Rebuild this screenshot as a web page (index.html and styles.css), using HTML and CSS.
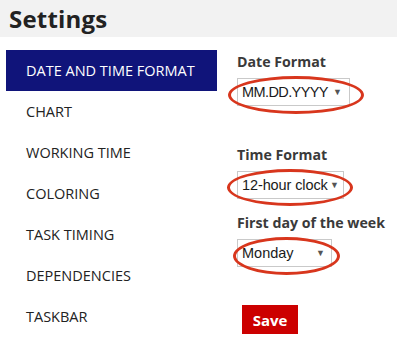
FILE: index.html
```html
<!DOCTYPE html>
<html>
<head>
<meta charset="utf-8">
<link rel="stylesheet" href="styles.css">
</head>
<body>
<header class="topbar"><h1 class="title">Settings</h1></header>
<div class="main">
  <nav class="nav">
    <div class="nav-item active">DATE AND TIME FORMAT</div>
    <div class="nav-item">CHART</div>
    <div class="nav-item">WORKING TIME</div>
    <div class="nav-item">COLORING</div>
    <div class="nav-item">TASK TIMING</div>
    <div class="nav-item">DEPENDENCIES</div>
    <div class="nav-item">TASKBAR</div>
  </nav>
  <section class="form">
    <div class="field f-date">
      <div class="label">Date Format</div>
      <div class="select-wrap">
        <div class="select s-date"><span>MM.DD.YYYY</span><span class="arrow">▼</span></div>
        <div class="ring r-date"></div>
      </div>
    </div>
    <div class="field f-time">
      <div class="label">Time Format</div>
      <div class="select-wrap">
        <div class="select s-time"><span>12-hour clock</span><span class="arrow">▼</span></div>
        <div class="ring r-time"></div>
      </div>
    </div>
    <div class="field f-week">
      <div class="label">First day of the week</div>
      <div class="select-wrap">
        <div class="select s-week"><span>Monday</span><span class="arrow">▼</span></div>
        <div class="ring r-week"></div>
      </div>
    </div>
    <button class="save">Save</button>
  </section>
</div>
</body>
</html>
```
FILE: styles.css
```css
html, body {
  margin: 0;
  padding: 0;
  background: #ffffff;
}
body {
  width: 397px;
  height: 343px;
  overflow: hidden;
  font-family: "Open Sans", "Noto Sans", sans-serif;
  color: #222;
}
.topbar {
  height: 37px;
  background: #f2f2f2;
  padding-left: 9px;
  display: flex;
  align-items: center;
}
.title {
  margin: 0;
  font-family: "Open Sans", sans-serif;
  font-weight: 700;
  font-size: 24px;
  color: #222;
  letter-spacing: 0.2px;
}
.main {
  display: flex;
}
.nav {
  margin-top: 13px;
  margin-left: 6px;
  width: 211px;
  display: flex;
  flex-direction: column;
}
.nav-item {
  height: 41px;
  display: flex;
  align-items: center;
  padding-left: 20px;
  font-size: 14.5px;
  color: #222;
  white-space: nowrap;
}
.nav-item.active {
  background: #10147a;
  color: #fff;
}
.form {
  margin-left: 20px;
  padding-top: 16px;
  display: flex;
  flex-direction: column;
  align-items: flex-start;
}
.label {
  font-weight: 700;
  font-size: 14.2px;
  line-height: 18px;
  color: #3a3a3a;
  margin-bottom: 7px;
  white-space: nowrap;
}
.f-time { margin-top: 40px; }
.f-week { margin-top: 15px; }
.select-wrap {
  position: relative;
}
.select {
  box-sizing: border-box;
  height: 28px;
  border: 1px solid #c9c9c9;
  background: #fff;
  display: flex;
  align-items: center;
  justify-content: space-between;
  padding: 0 5px 0 4px;
  font-family: "Liberation Sans", Arial, sans-serif;
  font-size: 14.5px;
  color: #1a1a1a;
  white-space: nowrap;
}
.arrow {
  font-size: 9px;
  color: #555;
  letter-spacing: 0;
}
.s-date { width: 113px; letter-spacing: -0.6px; padding-right: 7px; }
.s-time { width: 107px; padding-right: 4px; letter-spacing: -0.1px; }
.s-week { width: 95px; padding-right: 6px; }
.ring {
  position: absolute;
  box-sizing: border-box;
  border: 3px solid #d8361d;
  border-radius: 50%;
}
.r-date { left: -9px; top: -2px; width: 136px; height: 38px; }
.r-time { left: -10px; top: -2px; width: 126px; height: 37px; }
.r-week { left: -4px; top: -2px; width: 107px; height: 38px; }
.save {
  margin-top: 38px;
  margin-left: 5px;
  width: 56px;
  height: 29px;
  border: none;
  background: #cc0000;
  color: #fff;
  font-family: "Open Sans", sans-serif;
  font-weight: 700;
  font-size: 15px;
  padding: 0;
}
```
